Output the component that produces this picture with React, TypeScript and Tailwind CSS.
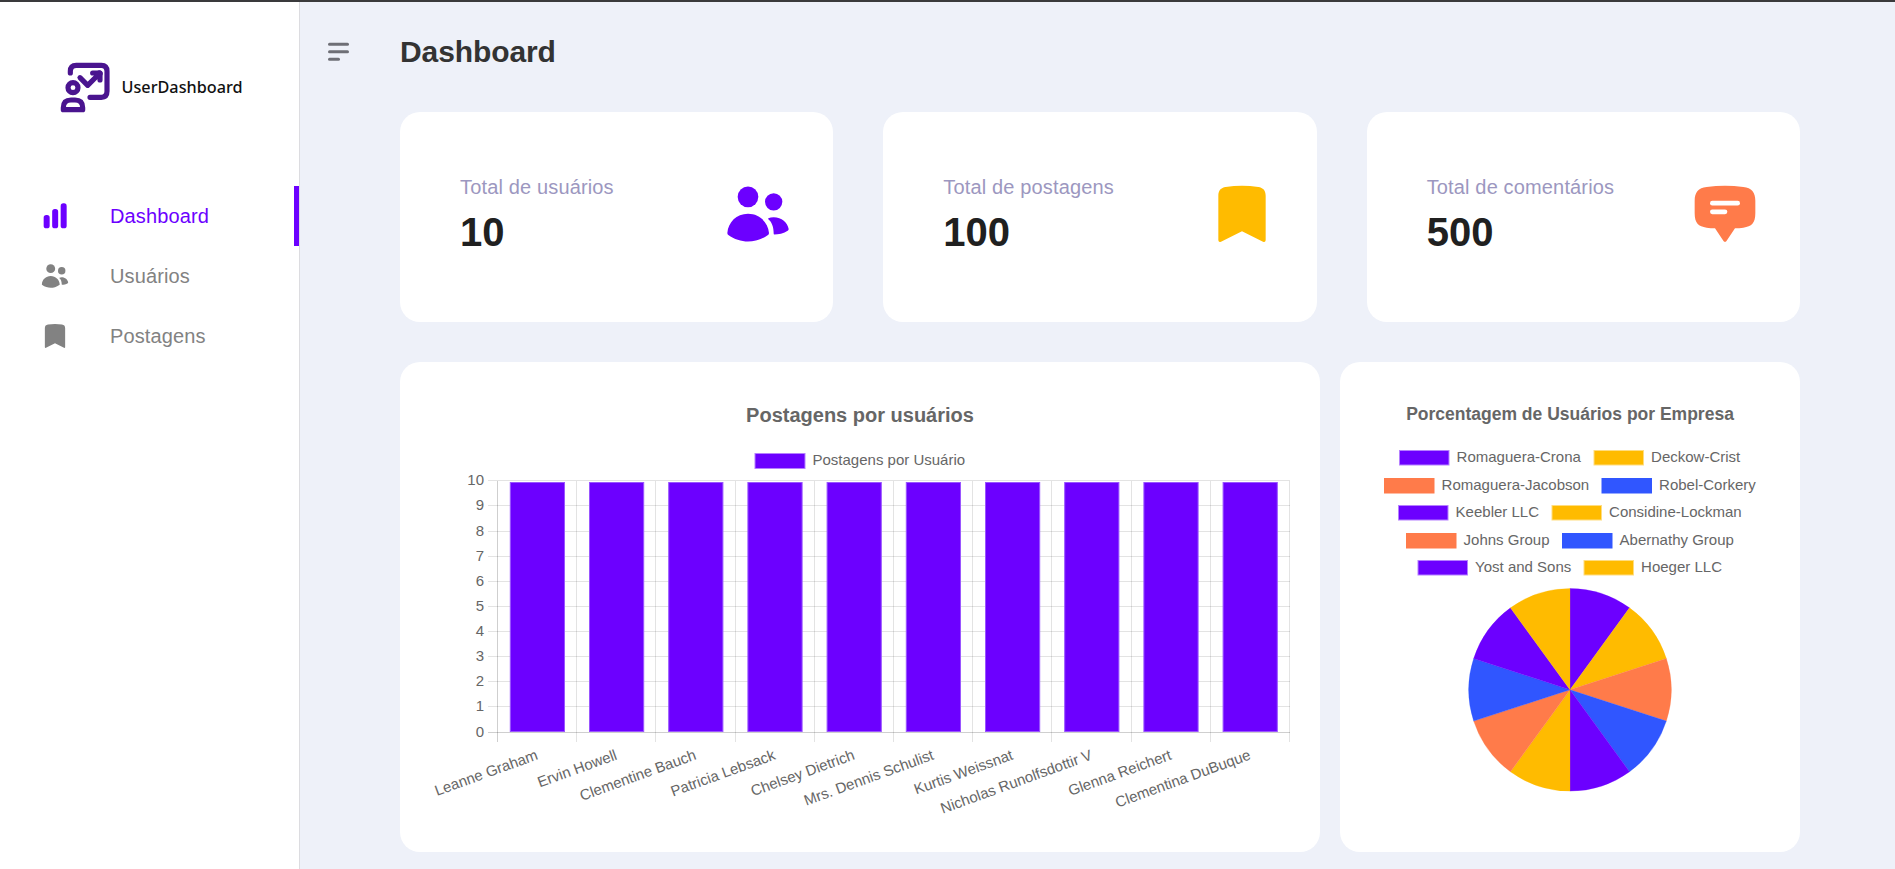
import type { ReactNode } from "react";

const PURPLE = "#6c00ff";
const YELLOW = "#ffbb00";
const ORANGE = "#ff7b4a";
const BLUE = "#3056ff";

type IconProps = { className?: string };

function UsersIcon({ className }: IconProps) {
  return (
    <svg viewBox="0 0 210 210" fill="currentColor" className={className}>
      <circle cx="75" cy="53.5" r="31" />
      <circle cx="152" cy="68.5" r="26" />
      <path d="M13 162C16 130 40 104.500 75 104.500S135 130 138 162q0 4-3 6C115 182 95 187.500 75 187.500S33 181 16 168q-3-2-3-6z" />
      <path d="M136 118Q143 114.500 152 114.500C176 114.500 194 131 197 150q0 3-3 5C183 163 165 166.500 154 166.500q-2 0-2-3C152 145 147 130 136 121q-1-2 0-3z" />
    </svg>
  );
}

function BookmarkIcon({ className }: IconProps) {
  return (
    <svg viewBox="0 0 210 210" fill="currentColor" className={className}>
      <path d="M34 50C34 34 42 26 56 24Q105 17 154 24C168 26 176 34 176 50V184q-1 7-8 4L105 156.500L42 188q-7 3-8-4z" />
    </svg>
  );
}

function CommentIcon({ className }: IconProps) {
  return (
    <svg viewBox="0 0 210 210" className={className}>
      <path
        fill="currentColor"
        d="M14 65C14 40 25 26.500 50 24Q105 16 160 24C185 26.500 196 40 196 65V103C196 132 185 143 160 146Q148 147.500 135 148L110 185q-5 7-10 0L75 148Q62 147.500 50 146C25 143 14 132 14 103z"
      />
      <rect x="60" y="65.500" width="90" height="14" rx="7" fill="#fff" />
      <rect x="60" y="91.500" width="52" height="14" rx="7" fill="#fff" />
    </svg>
  );
}

function BarsIcon({ className }: IconProps) {
  return (
    <svg viewBox="0 0 90 90" fill="currentColor" className={className}>
      <rect x="11" y="42" width="18" height="40" rx="8" />
      <rect x="36.500" y="24" width="18" height="58" rx="8" />
      <rect x="62" y="7" width="18" height="75" rx="8" />
    </svg>
  );
}

function MenuIcon() {
  return (
    <svg width="21" height="19" viewBox="0 0 21 19" fill="#6e6f76">
      <rect x="0" y="0.700" width="21" height="3.100" rx="1.500" />
      <rect x="0" y="8.200" width="21" height="3.100" rx="1.500" />
      <rect x="0" y="15.700" width="12" height="3.100" rx="1.500" />
    </svg>
  );
}

function Logo() {
  return (
    <svg width="230" height="52" viewBox="0 0 230 52">
      <g
        transform="scale(0.33333) translate(-180 -185)"
        fill="none"
        stroke="#4a148f"
        strokeWidth="15.5"
        strokeLinecap="round"
        strokeLinejoin="round"
      >
        <path d="M211 218V213Q211 195 229 195H304Q321 195 321 213V273Q321 291 304 291H270" />
        <path d="M240 232L263 255L297 221" />
        <path d="M278 218H300V239" />
        <path d="M292 226L298 220" strokeWidth="20" />
        <circle cx="219" cy="262" r="15" />
        <path d="M190 328V322Q190 299 213 299H225Q248 299 248 322V328Z" />
      </g>
      <text
        x="61.500"
        y="31"
        textLength="121"
        lengthAdjust="spacingAndGlyphs"
        className="fill-[#111] font-['Noto_Sans',sans-serif] text-[17px] font-medium"
      >
        UserDashboard
      </text>
    </svg>
  );
}

function NavItem({ icon, label, active = false }: { icon: ReactNode; label: string; active?: boolean }) {
  return (
    <a
      className={
        active
          ? "flex h-[60px] items-center gap-10 border-r-[5px] border-[#6c00ff] pl-10 text-xl tracking-[0.12px] text-[#6c00ff]"
          : "flex h-[60px] items-center gap-10 border-r-[5px] border-transparent pl-10 text-xl tracking-[0.12px] text-[#828282]"
      }
    >
      {icon}
      <span>{label}</span>
    </a>
  );
}

function StatCard({ label, value, icon }: { label: string; value: string; icon: ReactNode }) {
  return (
    <div className="flex h-[210px] items-start justify-between rounded-[20px] bg-white pl-[60px] pr-10">
      <div className="flex flex-col gap-[10px] pt-[64px]">
        <span className="text-[20px] leading-[23px] tracking-[0.15px] text-[#9c97c0]">{label}</span>
        <span className="text-[40px] leading-[46px] font-bold text-[#202020]">{value}</span>
      </div>
      <div className="pt-[67px]">{icon}</div>
    </div>
  );
}

const users = [
  "Leanne Graham",
  "Ervin Howell",
  "Clementine Bauch",
  "Patricia Lebsack",
  "Chelsey Dietrich",
  "Mrs. Dennis Schulist",
  "Kurtis Weissnat",
  "Nicholas Runolfsdottir V",
  "Glenna Reichert",
  "Clementina DuBuque",
];

const STEP_X = 79.2;
const TICKS_Y = [370.5, 344.5, 319.5, 294.5, 269.5, 244.5, 219.5, 194.5, 169.5, 143.5, 118.5];

function PostsChart() {
  return (
    <svg width="920" height="490" viewBox="0 0 920 490" className="block fill-[#666] text-[15px]">
      <text x="460" y="60" textAnchor="middle" className="text-[20px] font-bold">
        Postagens por usuários
      </text>
      <rect x="355" y="91.500" width="50" height="15" fill={PURPLE} stroke="#b580ff" />
      <text x="412.500" y="103">
        Postagens por Usuário
      </text>

      {TICKS_Y.map((y, i) => (
        <g key={i}>
          <line x1="88" x2="890" y1={y} y2={y} stroke="#000" strokeOpacity={i === 0 ? 0.19 : 0.11} />
          <text x="84" y={y + 4} textAnchor="end">
            {i}
          </text>
        </g>
      ))}
      {TICKS_Y.map((_, i) => {
        const x = Math.floor(97.5 + i * STEP_X) + 0.5;
        return (
          <line key={i} x1={x} x2={x} y1="119" y2="380" stroke="#000" strokeOpacity={i === 0 ? 0.19 : 0.11} />
        );
      })}

      {users.map((name, i) => {
        const left = 110 + i * STEP_X;
        const endX = 138.8 + i * STEP_X;
        return (
          <g key={name}>
            <rect x={left + 0.3} y="120.500" width="54.200" height="249" fill={PURPLE} stroke="#9a55ff" strokeWidth="1" />
            <text x={endX} y="397" textAnchor="end" transform={`rotate(-20 ${endX} 397)`}>
              {name}
            </text>
          </g>
        );
      })}
    </svg>
  );
}

const companies = [
  { name: "Romaguera-Crona", color: PURPLE, edge: "#b580ff", x: 59, y: 88 },
  { name: "Deckow-Crist", color: YELLOW, edge: "#ffdd80", x: 253.5, y: 88 },
  { name: "Romaguera-Jacobson", color: ORANGE, edge: ORANGE, x: 44, y: 116 },
  { name: "Robel-Corkery", color: BLUE, edge: BLUE, x: 261.5, y: 116 },
  { name: "Keebler LLC", color: PURPLE, edge: "#b580ff", x: 58, y: 143 },
  { name: "Considine-Lockman", color: YELLOW, edge: "#ffdd80", x: 211.5, y: 143 },
  { name: "Johns Group", color: ORANGE, edge: ORANGE, x: 66, y: 171 },
  { name: "Abernathy Group", color: BLUE, edge: BLUE, x: 222, y: 171 },
  { name: "Yost and Sons", color: PURPLE, edge: "#b580ff", x: 77.5, y: 198 },
  { name: "Hoeger LLC", color: YELLOW, edge: "#ffdd80", x: 243.5, y: 198 },
];

const PIE = { cx: 230, cy: 327.8, r: 101.3 };

function slicePath(i: number) {
  const from = (i * Math.PI) / 5;
  const to = ((i + 1) * Math.PI) / 5;
  const px = (a: number) => (PIE.cx + PIE.r * Math.sin(a)).toFixed(2);
  const py = (a: number) => (PIE.cy - PIE.r * Math.cos(a)).toFixed(2);
  return `M${PIE.cx} ${PIE.cy}L${px(from)} ${py(from)}A${PIE.r} ${PIE.r} 0 0 1 ${px(to)} ${py(to)}Z`;
}

function CompaniesChart() {
  return (
    <svg width="460" height="490" viewBox="0 0 460 490" className="block fill-[#666] text-[15px]">
      <text x="230" y="58" textAnchor="middle" className="text-[17.5px] font-bold">
        Porcentagem de Usuários por Empresa
      </text>
      {companies.map((c) => (
        <g key={c.name}>
          <rect x={c.x + 0.5} y={c.y + 0.5} width="49.500" height="14.500" fill={c.color} stroke={c.edge} />
          <text x={c.x + 57.6} y={c.y + 12}>
            {c.name}
          </text>
        </g>
      ))}
      {companies.map((c, i) => (
        <path key={c.name} d={slicePath(i)} fill={c.color} stroke={c.color} strokeWidth="0.300" />
      ))}
    </svg>
  );
}

export default function App() {
  return (
    <div className="flex h-[869px] w-full overflow-hidden border-t-2 border-[#3a3a3c] bg-[#eef1f9] font-['Liberation_Sans',Arial,sans-serif]">
      <aside className="w-[300px] shrink-0 border-r border-[#dcdce0] bg-white">
        <div className="pt-[60px] pl-[60px]">
          <Logo />
        </div>
        <nav className="mt-[72px] flex flex-col">
          <NavItem active label="Dashboard" icon={<BarsIcon className="size-[30px]" />} />
          <NavItem label="Usuários" icon={<UsersIcon className="size-[30px]" />} />
          <NavItem label="Postagens" icon={<BookmarkIcon className="size-[30px]" />} />
        </nav>
      </aside>
      <main className="grow">
        <header className="flex h-[110px] items-start gap-[51px] pl-[28px]">
          <div className="pt-[40px]">
            <MenuIcon />
          </div>
          <h1 className="pt-[32px] text-[30px] leading-[35px] font-bold tracking-[-0.1px] text-[#333]">Dashboard</h1>
        </header>
        <div className="ml-[100px] flex w-[1400px] flex-col gap-10">
          <section className="grid grid-cols-3 gap-[50px]">
            <StatCard label="Total de usuários" value="10" icon={<UsersIcon className="size-[70px] text-[#6c00ff]" />} />
            <StatCard label="Total de postagens" value="100" icon={<BookmarkIcon className="size-[70px] text-[#ffbb00]" />} />
            <StatCard label="Total de comentários" value="500" icon={<CommentIcon className="size-[70px] text-[#ff7b4a]" />} />
          </section>
          <section className="flex gap-5">
            <div className="h-[490px] w-[920px] rounded-[20px] bg-white">
              <PostsChart />
            </div>
            <div className="h-[490px] w-[460px] rounded-[20px] bg-white">
              <CompaniesChart />
            </div>
          </section>
        </div>
      </main>
    </div>
  );
}
